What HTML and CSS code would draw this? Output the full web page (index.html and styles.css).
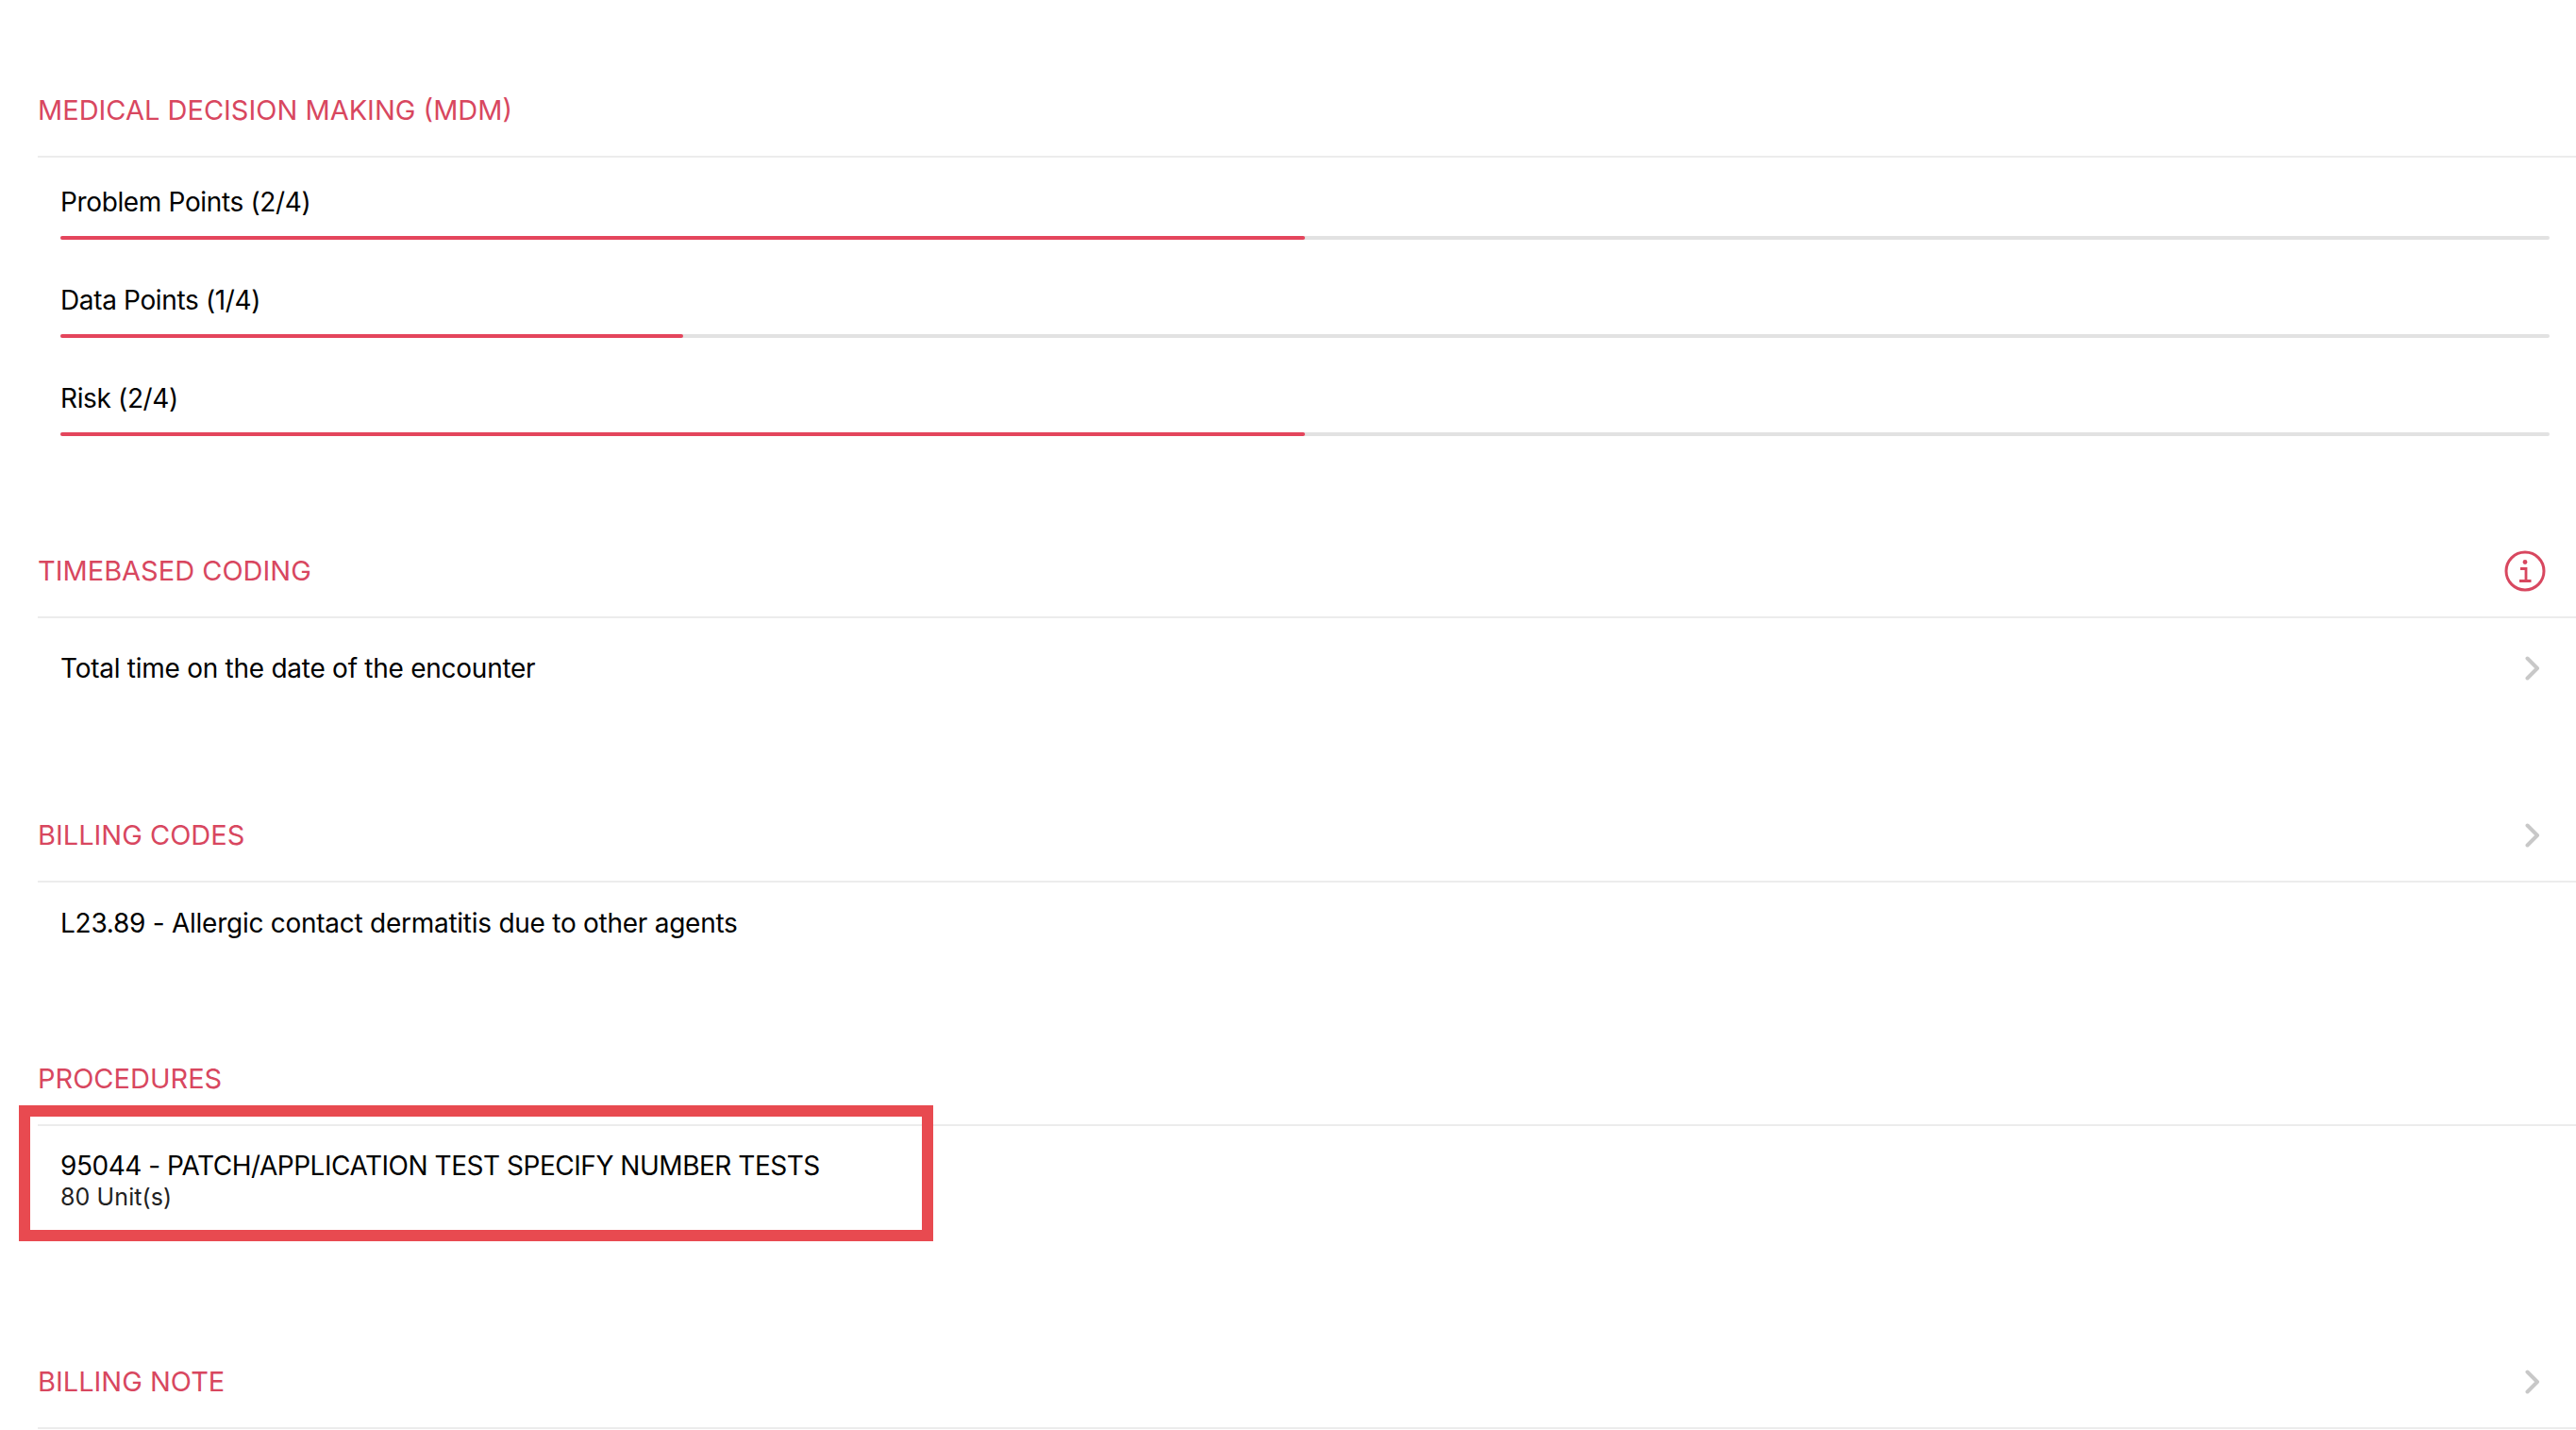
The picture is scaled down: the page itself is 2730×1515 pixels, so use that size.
FILE: index.html
```html
<!DOCTYPE html>
<html lang="en">
<head>
<meta charset="utf-8">
<title>Coding summary</title>
<link rel="stylesheet" href="styles.css">
</head>
<body>
<main class="page">
  <section class="section section-mdm">
    <header class="section-head"><h2>MEDICAL DECISION MAKING (MDM)</h2></header>
    <div class="meter">
      <div class="meter-label">Problem Points (2/4)</div>
      <div class="track"><div class="fill" style="width:50%"></div></div>
    </div>
    <div class="meter">
      <div class="meter-label">Data Points (1/4)</div>
      <div class="track"><div class="fill" style="width:25%"></div></div>
    </div>
    <div class="meter">
      <div class="meter-label">Risk (2/4)</div>
      <div class="track"><div class="fill" style="width:50%"></div></div>
    </div>
  </section>

  <section class="section section-time">
    <header class="section-head">
      <h2>TIMEBASED CODING</h2>
      <svg class="info" viewBox="0 0 44 44" aria-hidden="true">
        <circle cx="22" cy="22" r="20" fill="none" stroke="#d8475f" stroke-width="3"/>
        <circle cx="22" cy="12.5" r="2.4" fill="#d8475f"/>
        <path d="M17 19.5h6v12.5M16 32.5h12.5" fill="none" stroke="#d8475f" stroke-width="2.8"/>
      </svg>
    </header>
    <div class="row row-link">
      <span class="row-text">Total time on the date of the encounter</span>
      <svg class="chevron" viewBox="0 0 16 26" aria-hidden="true"><path d="M2.5 2.5 13 13 2.5 23.5" fill="none" stroke="#c8c8c8" stroke-width="4" stroke-linecap="round" stroke-linejoin="round"/></svg>
    </div>
  </section>

  <section class="section section-codes">
    <header class="section-head">
      <h2>BILLING CODES</h2>
      <svg class="chevron" viewBox="0 0 16 26" aria-hidden="true"><path d="M2.5 2.5 13 13 2.5 23.5" fill="none" stroke="#c8c8c8" stroke-width="4" stroke-linecap="round" stroke-linejoin="round"/></svg>
    </header>
    <div class="row row-code"><span class="row-text">L23.89 - Allergic contact dermatitis due to other agents</span></div>
  </section>

  <section class="section section-proc">
    <header class="section-head"><h2>PROCEDURES</h2></header>
    <div class="proc">
      <div class="row-text">95044 - PATCH/APPLICATION TEST SPECIFY NUMBER TESTS</div>
      <div class="proc-sub">80 Unit(s)</div>
    </div>
    <div class="highlight"></div>
  </section>

  <section class="section">
    <header class="section-head">
      <h2>BILLING NOTE</h2>
      <svg class="chevron" viewBox="0 0 16 26" aria-hidden="true"><path d="M2.5 2.5 13 13 2.5 23.5" fill="none" stroke="#c8c8c8" stroke-width="4" stroke-linecap="round" stroke-linejoin="round"/></svg>
    </header>
  </section>
</main>
</body>
</html>
```
FILE: styles.css
```css
html, body {
  margin: 0;
  padding: 0;
  background: #fff;
  overflow: hidden;
}
body {
  font-family: Inter, "Liberation Sans", sans-serif;
  color: #000;
}
.page {
  padding: 68px 0 0 40px;
  height: 1515px;
  box-sizing: border-box;
}
.section {
  position: relative;
}
.section-mdm { margin-bottom: 77px; }
.section-time { margin-bottom: 75px; }
.section-codes { margin-bottom: 73px; }
.section-proc { margin-bottom: 100px; }
.section-head {
  height: 99px;
  box-sizing: border-box;
  border-bottom: 2px solid #ececec;
  display: flex;
  align-items: center;
  justify-content: space-between;
  padding: 0 38px 0 0;
}
.section-head h2 {
  margin: 0;
  font-size: 29px;
  font-weight: 400;
  color: #d8475f;
}
.meter {
  height: 104px;
  box-sizing: border-box;
  padding: 0 28px 0 24px;
  display: flex;
  flex-direction: column;
}
.meter-label {
  height: 83px;
  line-height: 95px;
  font-size: 28px;
  letter-spacing: -0.36px;
}
.track {
  height: 4px;
  border-radius: 2px;
  background: #e2e2e2;
}
.fill {
  height: 100%;
  border-radius: 2px;
  background: #e4455c;
}
.row {
  display: flex;
  align-items: center;
  justify-content: space-between;
  padding: 0 38px 0 24px;
}
.row-link { height: 106px; }
.row-code { height: 86px; }
.row-text {
  font-size: 28px;
  letter-spacing: -0.26px;
}
.proc {
  padding: 22px 24px 0;
  height: 122px;
  box-sizing: border-box;
}
.proc .row-text {
  line-height: 40px;
  letter-spacing: -0.47px;
}
.proc-sub {
  font-size: 25px;
  line-height: 26px;
  color: #222;
  letter-spacing: 0.1px;
}
.info {
  width: 44px;
  height: 44px;
  margin-right: -6px;
}
.chevron {
  width: 16px;
  height: 26px;
  flex: none;
}
.highlight {
  position: absolute;
  left: -20px;
  top: 77px;
  width: 969px;
  height: 144px;
  box-sizing: border-box;
  border: 12px solid #e84a50;
}
```
